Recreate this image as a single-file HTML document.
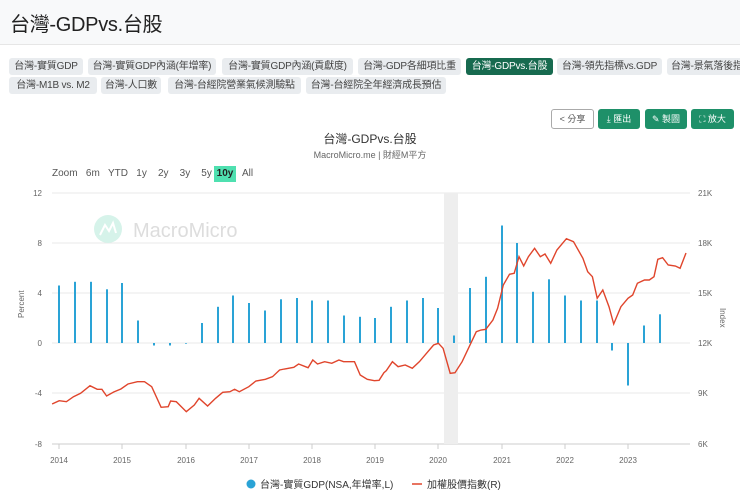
<!DOCTYPE html>
<html><head><meta charset="utf-8"><style>
*{margin:0;padding:0;box-sizing:border-box}
body{width:740px;height:500px;overflow:hidden;background:#fff;font-family:"Liberation Sans","Noto Sans CJK TC",sans-serif;color:#333;position:relative}
.hdr{position:absolute;left:0;top:0;width:740px;height:45px;background:#f8f9fa;border-bottom:1px solid #e6e6e6}
.hdr h1{position:absolute;left:10px;top:8px;font-size:20px;font-weight:normal;color:#222;white-space:nowrap;letter-spacing:-0.3px}
.tag{position:absolute;height:17px;background:#e9ecef;border-radius:3px;font-size:10px;letter-spacing:-0.2px;line-height:17px;color:#444;text-align:center;white-space:nowrap;overflow:hidden}
.tag.act{background:#176a4f;color:#fff}
.btn{position:absolute;top:109px;height:20px;border-radius:3px;background:#1e9069;color:#fff;font-size:9px;line-height:20px;text-align:center;white-space:nowrap}
.btn.w{background:#fff;border:1px solid #aaa;color:#555;line-height:18px}
.t{position:absolute;white-space:nowrap}
</style></head><body>
<div class="hdr"><h1>台灣-GDPvs.台股</h1></div>
<div class="tag" style="left:9px;top:58px;width:74px">台灣-實質GDP</div>
<div class="tag" style="left:88px;top:58px;width:128px">台灣-實質GDP內涵(年增率)</div>
<div class="tag" style="left:222px;top:58px;width:131px">台灣-實質GDP內涵(貢獻度)</div>
<div class="tag" style="left:358px;top:58px;width:103px">台灣-GDP各細項比重</div>
<div class="tag act" style="left:466px;top:58px;width:87px">台灣-GDPvs.台股</div>
<div class="tag" style="left:557px;top:58px;width:105px">台灣-領先指標vs.GDP</div>
<div class="tag" style="left:667px;top:58px;width:80px;text-align:left;padding-left:4px">台灣-景氣落後指標</div>
<div class="tag" style="left:9px;top:77px;width:88px">台灣-M1B vs. M2</div>
<div class="tag" style="left:101px;top:77px;width:60px">台灣-人口數</div>
<div class="tag" style="left:168px;top:77px;width:133px">台灣-台經院營業氣候測驗點</div>
<div class="tag" style="left:306px;top:77px;width:140px">台灣-台經院全年經濟成長預估</div>
<div class="btn w" style="left:551px;width:43px">&lt; 分享</div>
<div class="btn" style="left:598px;width:42px">⤓ 匯出</div>
<div class="btn" style="left:645px;width:42px">✎ 製圖</div>
<div class="btn" style="left:691px;width:43px">⛶ 放大</div>
<div class="t" style="left:0;width:740px;text-align:center;top:130px;font-size:12px;color:#333">台灣-GDPvs.台股</div>
<div class="t" style="left:0;width:740px;text-align:center;top:148px;font-size:9px;color:#666">MacroMicro.me | 財經M平方</div>
<div class="t" style="left:52px;top:168px;font-size:10px;color:#555">Zoom&nbsp;&nbsp; 6m&nbsp;&nbsp; YTD&nbsp;&nbsp; 1y&nbsp;&nbsp;&nbsp; 2y&nbsp;&nbsp;&nbsp; 3y&nbsp;&nbsp;&nbsp; 5y</div>
<div class="t" style="left:214px;top:166px;width:22px;height:16px;background:#4fe0b0;font-size:10px;font-weight:bold;line-height:16px;text-align:center;color:#222">10y</div>
<div class="t" style="left:242px;top:168px;font-size:10px;color:#555">All</div>
<svg width="740" height="500" style="position:absolute;left:0;top:0" font-family="Liberation Sans" font-size="8" fill="#666">
<g stroke="#e8e8e8" stroke-width="1">
<line x1="52" y1="193" x2="690" y2="193"/><line x1="52" y1="243" x2="690" y2="243"/><line x1="52" y1="293" x2="690" y2="293"/><line x1="52" y1="343" x2="690" y2="343"/><line x1="52" y1="393" x2="690" y2="393"/><line x1="52" y1="444" x2="690" y2="444" stroke="#ccc"/>
</g>
<rect x="444" y="193" width="14" height="251" fill="#eee"/>
<g text-anchor="end"><text x="42" y="196">12</text><text x="42" y="246">8</text><text x="42" y="296">4</text><text x="42" y="346">0</text><text x="42" y="396">-4</text><text x="42" y="447">-8</text></g>
<g><text x="698" y="196">21K</text><text x="698" y="246">18K</text><text x="698" y="296">15K</text><text x="698" y="346">12K</text><text x="698" y="396">9K</text><text x="698" y="447">6K</text></g>
<text transform="translate(24,318) rotate(-90)" font-size="8">Percent</text>
<text transform="translate(720,308) rotate(90)" font-size="8">Index</text>
<g text-anchor="middle"><text x="59" y="463">2014</text><text x="122" y="463">2015</text><text x="186" y="463">2016</text><text x="249" y="463">2017</text><text x="312" y="463">2018</text><text x="375" y="463">2019</text><text x="438" y="463">2020</text><text x="502" y="463">2021</text><text x="565" y="463">2022</text><text x="628" y="463">2023</text></g>
<g stroke="#ccc"><line x1="59" y1="444" x2="59" y2="449"/><line x1="122" y1="444" x2="122" y2="449"/><line x1="186" y1="444" x2="186" y2="449"/><line x1="249" y1="444" x2="249" y2="449"/><line x1="312" y1="444" x2="312" y2="449"/><line x1="375" y1="444" x2="375" y2="449"/><line x1="438" y1="444" x2="438" y2="449"/><line x1="502" y1="444" x2="502" y2="449"/><line x1="565" y1="444" x2="565" y2="449"/><line x1="628" y1="444" x2="628" y2="449"/></g>
<circle cx="108" cy="229" r="14" fill="#d6f3ea"/>
<path d="M100 235 L105 225 L109 231 L113 223 L116 233" stroke="#fff" stroke-width="2" fill="none"/>
<text x="133" y="237" font-size="20" fill="#ddd">MacroMicro</text>
<g stroke="#2aa3d6" stroke-width="2">
<line x1="59" y1="343" x2="59" y2="285.5"/><line x1="75" y1="343" x2="75" y2="281.8"/><line x1="91" y1="343" x2="91" y2="281.8"/><line x1="107" y1="343" x2="107" y2="289.3"/><line x1="122" y1="343" x2="122" y2="283"/><line x1="138" y1="343" x2="138" y2="320.5"/><line x1="154" y1="343" x2="154" y2="345.5"/><line x1="170" y1="343" x2="170" y2="345.5"/><line x1="186" y1="343" x2="186" y2="343.7"/><line x1="202" y1="343" x2="202" y2="323"/><line x1="218" y1="343" x2="218" y2="306.8"/><line x1="233" y1="343" x2="233" y2="295.5"/><line x1="249" y1="343" x2="249" y2="303"/><line x1="265" y1="343" x2="265" y2="310.5"/><line x1="281" y1="343" x2="281" y2="299.3"/><line x1="297" y1="343" x2="297" y2="298"/><line x1="312" y1="343" x2="312" y2="300.5"/><line x1="328" y1="343" x2="328" y2="300.5"/><line x1="344" y1="343" x2="344" y2="315.5"/><line x1="360" y1="343" x2="360" y2="316.8"/><line x1="375" y1="343" x2="375" y2="318"/><line x1="391" y1="343" x2="391" y2="306.8"/><line x1="407" y1="343" x2="407" y2="300.5"/><line x1="423" y1="343" x2="423" y2="298"/><line x1="438" y1="343" x2="438" y2="308"/><line x1="454" y1="343" x2="454" y2="335.5"/><line x1="470" y1="343" x2="470" y2="288"/><line x1="486" y1="343" x2="486" y2="276.8"/><line x1="502" y1="343" x2="502" y2="225.5"/><line x1="517" y1="343" x2="517" y2="243"/><line x1="533" y1="343" x2="533" y2="291.8"/><line x1="549" y1="343" x2="549" y2="279.3"/><line x1="565" y1="343" x2="565" y2="295.5"/><line x1="581" y1="343" x2="581" y2="300.5"/><line x1="597" y1="343" x2="597" y2="300.5"/><line x1="612" y1="343" x2="612" y2="350.5"/><line x1="628" y1="343" x2="628" y2="385.5"/><line x1="644" y1="343" x2="644" y2="325.5"/><line x1="660" y1="343" x2="660" y2="314.3"/>
</g>
<polyline fill="none" stroke="#e0452c" stroke-width="1.4" points="52.1,404 59.2,400.7 66.4,401.7 73.5,396.7 80.6,393.3 90,385.7 97.2,389.3 101.9,389.3 106.6,396 113.7,392 120.9,389 128,384 137.4,381.7 144.5,381.7 151.7,386.7 161.1,407.3 168.2,406.7 170.6,401 176.3,401.7 186.3,411.7 194.3,405 199.1,398.3 207.6,406 215.6,398.3 222.7,392.3 229.9,391.7 234.6,389.3 239.3,391.7 248.8,386.7 255.9,381 265.4,379.3 272.5,376.7 279.6,370 284.4,369 293.8,367.3 298.6,364 308.1,367.7 312.8,360 317.5,364 324.6,361.7 331.8,363.3 338.9,360 343.6,361.7 354.5,361.7 360.2,375 367.3,379.3 374.4,380.7 379.1,380.3 383.9,372.7 386.3,370.7 392.4,361.7 398.1,366.7 405.2,365 412.3,368.3 419.4,361.7 426.5,353.3 433.6,345 438.4,343.3 443.1,348.3 450.2,373.3 455,372.7 462.1,361.7 469.2,346.7 476.3,331.7 481,330 485.8,329.3 492.9,320 497.6,308.3 503.3,285 509.5,274.3 514.2,273.3 519,256.7 523.7,266 528.4,256.7 534.6,248.3 540.3,256.7 545,254 550.7,263.3 556.9,250 566.4,238.7 573.5,241.7 582.9,258.3 587.7,271.7 592.4,276.7 597.2,298.3 602.8,290 609,306.7 613.7,324 620.9,306.7 628,298.3 632.7,295 637.4,283.3 644.5,280 649.3,280 654,276.7 657.8,259.3 662.6,257.7 668.2,265 675.4,266 680.1,268.3 686,253"/>
<circle cx="251" cy="484" r="4.5" fill="#2aa3d6"/>
<text x="260" y="488" font-size="10" fill="#333" font-family="Liberation Sans, Noto Sans CJK TC, sans-serif">台灣-實質GDP(NSA,年增率,L)</text>
<line x1="412" y1="484" x2="422" y2="484" stroke="#e0452c" stroke-width="1.5"/>
<text x="427" y="488" font-size="10" fill="#333" font-family="Liberation Sans, Noto Sans CJK TC, sans-serif">加權股價指數(R)</text>
</svg>
</body></html>
